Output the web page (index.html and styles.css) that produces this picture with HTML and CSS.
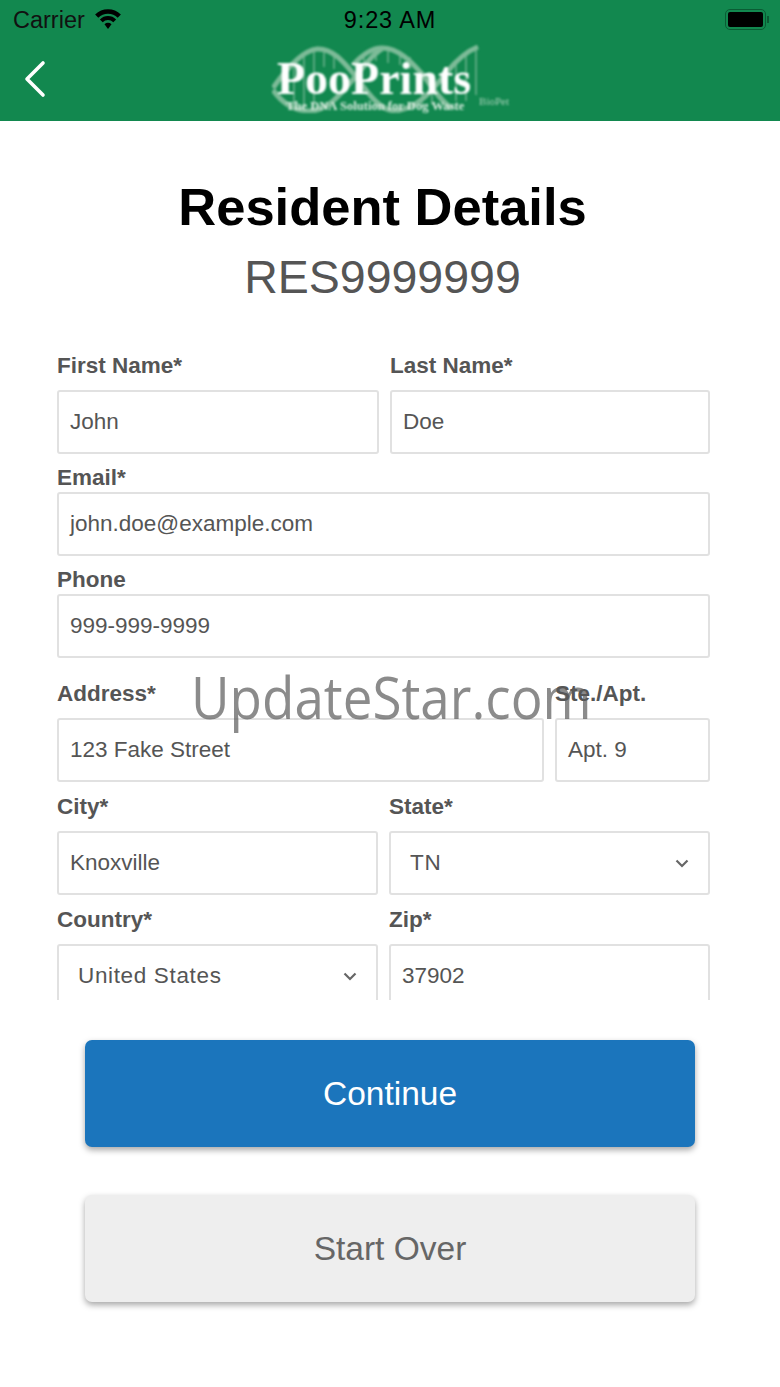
FILE: index.html
```html
<!DOCTYPE html>
<html lang="en">
<head>
  <meta charset="UTF-8" />
  <meta name="viewport" content="width=device-width, initial-scale=1.0" />
  <title>Resident Details</title>
  <link rel="stylesheet" href="styles.css">
</head>
<body>
  <div class="header">
    <!-- Status bar -->
    <div class="status-bar">
      <div class="carrier">
        <span>Carrier</span>
        <svg class="wifi" viewBox="0 0 28 20" width="28" height="20">
          <path d="M2.7 7.2 A16 16 0 0 1 25.3 7.2" fill="none" stroke="#000" stroke-width="4.5"/>
          <path d="M7.3 11.8 A9.5 9.5 0 0 1 20.7 11.8" fill="none" stroke="#000" stroke-width="4"/>
          <path d="M10.5 15.2 A5 5 0 0 1 17.5 15.2 L14 20 Z" fill="#000"/>
        </svg>
      </div>
      <div class="time">9:23 AM</div>
      <div class="battery">
        <div class="battery-body"><div class="battery-fill"></div></div>
        <div class="battery-cap"></div>
      </div>
    </div>

    <!-- Nav bar -->
    <div class="nav-bar">
      <svg class="back" viewBox="0 0 24 38" width="24" height="38">
        <path d="M21 3 L5 19 L21 35" fill="none" stroke="#fff" stroke-width="3.6" stroke-linecap="round" stroke-linejoin="round"/>
      </svg>
      <div class="logo">
        <svg class="helix" viewBox="0 0 238 68" width="238" height="68">
          <g fill="none" stroke="#7dbb98" stroke-width="5">
            <path d="M1 43 C10 30 28 6 45 4 C62 3 74 20 85 33 C96 48 108 66 124 66"/>
            <path d="M81 20 C90 10 100 3 110 3 C128 3 142 20 151 30 C160 42 170 58 180 63"/>
            <path d="M1 45 C8 55 20 66 38 66 C58 66 72 44 85 30 C94 18 102 8 110 4"/>
            <path d="M124 66 C150 62 164 40 175 27 C184 16 195 6 206 2"/>
          </g>
          <g stroke="#7dbb98" stroke-width="1.3">
            <path d="M22 22 V60 M32 12 V64 M42 6 V64 M52 6 V22 M62 10 V24 M92 12 V22 M104 4 V16 M116 4 V18 M128 7 V20 M138 12 V24 M150 30 V62 M160 44 V60 M184 16 V56 M194 8 V56 M204 4 V50"/>
          </g>
        </svg>
        <span class="logo-name">PooPrints</span>
        <span class="logo-tag">The DNA Solution for Dog Waste</span>
        <span class="logo-bio">BioPet</span>
      </div>
    </div>
  </div>

  <div class="page-title">
    <h1>Resident Details</h1>
    <div class="res-id">RES9999999</div>
  </div>

  <div class="form-scroll">
    <div class="row row-first">
      <div class="field half-a">
        <label>First Name*</label>
        <div class="box">John</div>
      </div>
      <div class="field half-b">
        <label>Last Name*</label>
        <div class="box">Doe</div>
      </div>
    </div>

    <div class="row row-tight">
      <div class="field grow">
        <label>Email*</label>
        <div class="box">john.doe@example.com</div>
      </div>
    </div>

    <div class="row row-tight">
      <div class="field grow">
        <label>Phone</label>
        <div class="box">999-999-9999</div>
      </div>
    </div>

    <div class="row row-address">
      <div class="field address">
        <label>Address*</label>
        <div class="box">123 Fake Street</div>
      </div>
      <div class="field suite">
        <label>Ste./Apt.</label>
        <div class="box">Apt. 9</div>
      </div>
    </div>

    <div class="row row-split">
      <div class="field half">
        <label>City*</label>
        <div class="box">Knoxville</div>
      </div>
      <div class="field half">
        <label>State*</label>
        <div class="box select">
          <span>TN</span>
          <svg viewBox="0 0 14 9" width="14" height="9"><path d="M1.5 1.5 L7 7 L12.5 1.5" fill="none" stroke="#666" stroke-width="2.2"/></svg>
        </div>
      </div>
    </div>

    <div class="row row-split">
      <div class="field half">
        <label>Country*</label>
        <div class="box select">
          <span>United States</span>
          <svg viewBox="0 0 14 9" width="14" height="9"><path d="M1.5 1.5 L7 7 L12.5 1.5" fill="none" stroke="#666" stroke-width="2.2"/></svg>
        </div>
      </div>
      <div class="field half">
        <label>Zip*</label>
        <div class="box">37902</div>
      </div>
    </div>
  </div>

  <div class="actions">
    <button class="btn btn-primary">Continue</button>
    <button class="btn btn-secondary">Start Over</button>
  </div>

  <div class="watermark">UpdateStar.com</div>
</body>
</html>
```

FILE: styles.css
```css
* {
  box-sizing: border-box;
}

html, body {
  height: 100%;
}

body {
  font-family: 'Liberation Sans', Arial, sans-serif;
  background: #fff;
  margin: 0;
  padding: 0;
  color: #555;
  position: relative;
  overflow: hidden;
}

.header {
  background: #12884f;
  height: 121px;
}

.status-bar {
  height: 40px;
  padding: 0 11px 0 13px;
  display: grid;
  grid-template-columns: 1fr auto 1fr;
  align-items: center;
  color: #000;
  font-size: 23.5px;
}

.carrier {
  display: flex;
  align-items: center;
  gap: 9px;
  color: #111;
}

.wifi {
  margin-top: -2px;
}

.time {
  text-align: center;
  letter-spacing: 0.9px;
  margin-left: -2px;
}

.battery {
  display: flex;
  align-items: center;
  justify-content: flex-end;
  margin-top: -2px;
}

.battery-body {
  width: 41px;
  height: 21px;
  border: 1.5px solid #0a5c34;
  border-radius: 5px;
  padding: 2px;
}

.battery-fill {
  width: 100%;
  height: 100%;
  background: #000;
  border-radius: 2px;
}

.battery-cap {
  width: 2px;
  height: 7px;
  background: #0a5c34;
  margin-left: 1px;
}

.nav-bar {
  height: 81px;
  position: relative;
  display: flex;
  justify-content: center;
  align-items: flex-start;
  padding-top: 5px;
  padding-left: 2px;
}

.back {
  position: absolute;
  left: 22px;
  top: 20px;
}

.logo {
  position: relative;
  width: 238px;
  height: 68px;
  filter: blur(0.8px);
}

.helix {
  display: block;
}

.logo-name {
  position: absolute;
  left: 5px;
  top: 10px;
  font-family: 'Liberation Serif', serif;
  font-weight: bold;
  font-size: 46px;
  line-height: 48px;
  color: #fff;
}

.logo-tag {
  position: absolute;
  left: 14px;
  top: 54px;
  font-family: 'Liberation Serif', serif;
  font-weight: bold;
  font-size: 12.6px;
  line-height: 14px;
  color: #d9ecdf;
  white-space: nowrap;
}

.logo-bio {
  position: absolute;
  right: 1px;
  top: 50px;
  font-family: 'Liberation Serif', serif;
  font-size: 11px;
  line-height: 13px;
  color: #a9d3ba;
}

.page-title {
  text-align: center;
  padding: 57px 15px 0 0;
}

.page-title h1 {
  margin: 0;
  font-size: 52.5px;
  line-height: 58px;
  font-weight: bold;
  color: #000;
}

.res-id {
  font-size: 46.5px;
  line-height: 52px;
  margin-top: 15px;
  color: #555;
}

.form-scroll {
  position: absolute;
  top: 354px;
  left: 57px;
  width: 653px;
  height: 646px;
  overflow: hidden;
}

.row {
  display: flex;
  gap: 11px;
}

.field {
  display: flex;
  flex-direction: column;
}

.field label {
  display: block;
  font-size: 22.5px;
  font-weight: bold;
  line-height: 24px;
  color: #555;
}

.box {
  height: 64px;
  border: 2.5px solid #e1e1e1;
  border-radius: 3px;
  padding: 0 11px;
  font-size: 22.5px;
  display: flex;
  align-items: center;
  color: #555;
  background: #fff;
}

.select {
  justify-content: space-between;
  padding: 0 19px 0 19px;
  letter-spacing: 0.65px;
}

.grow {
  flex: 1;
}

.half-a {
  width: 322px;
}

.half-b {
  width: 320px;
}

.half {
  width: 321px;
}

.address {
  width: 487px;
}

.suite {
  width: 155px;
}

.row-first label {
  margin-bottom: 12px;
}

.row-tight {
  margin-top: 12px;
}

.row-tight label {
  margin-bottom: 2px;
}

.row-address {
  margin-top: 24px;
}

.row-address label {
  margin-bottom: 12px;
}

.row-split {
  margin-top: 13px;
}

.row-split label {
  margin-bottom: 12px;
}

.actions {
  position: absolute;
  top: 1040px;
  left: 85px;
  width: 610px;
  display: flex;
  flex-direction: column;
  gap: 48px;
}

.btn {
  height: 107px;
  width: 100%;
  border: none;
  border-radius: 7px;
  font-family: inherit;
  font-size: 33.5px;
  box-shadow: 0 3px 6px rgba(0,0,0,0.35);
}

.btn-primary {
  background: #1b75bc;
  color: #fff;
}

.btn-secondary {
  background: #eee;
  color: #666;
}

.watermark {
  position: absolute;
  left: 191px;
  top: 657px;
  font-family: 'Open Sans', sans-serif;
  font-size: 58px;
  line-height: 80px;
  color: rgba(90,90,90,0.7);
  white-space: nowrap;
  pointer-events: none;
  transform: scaleX(0.913);
  transform-origin: left center;
}
```
